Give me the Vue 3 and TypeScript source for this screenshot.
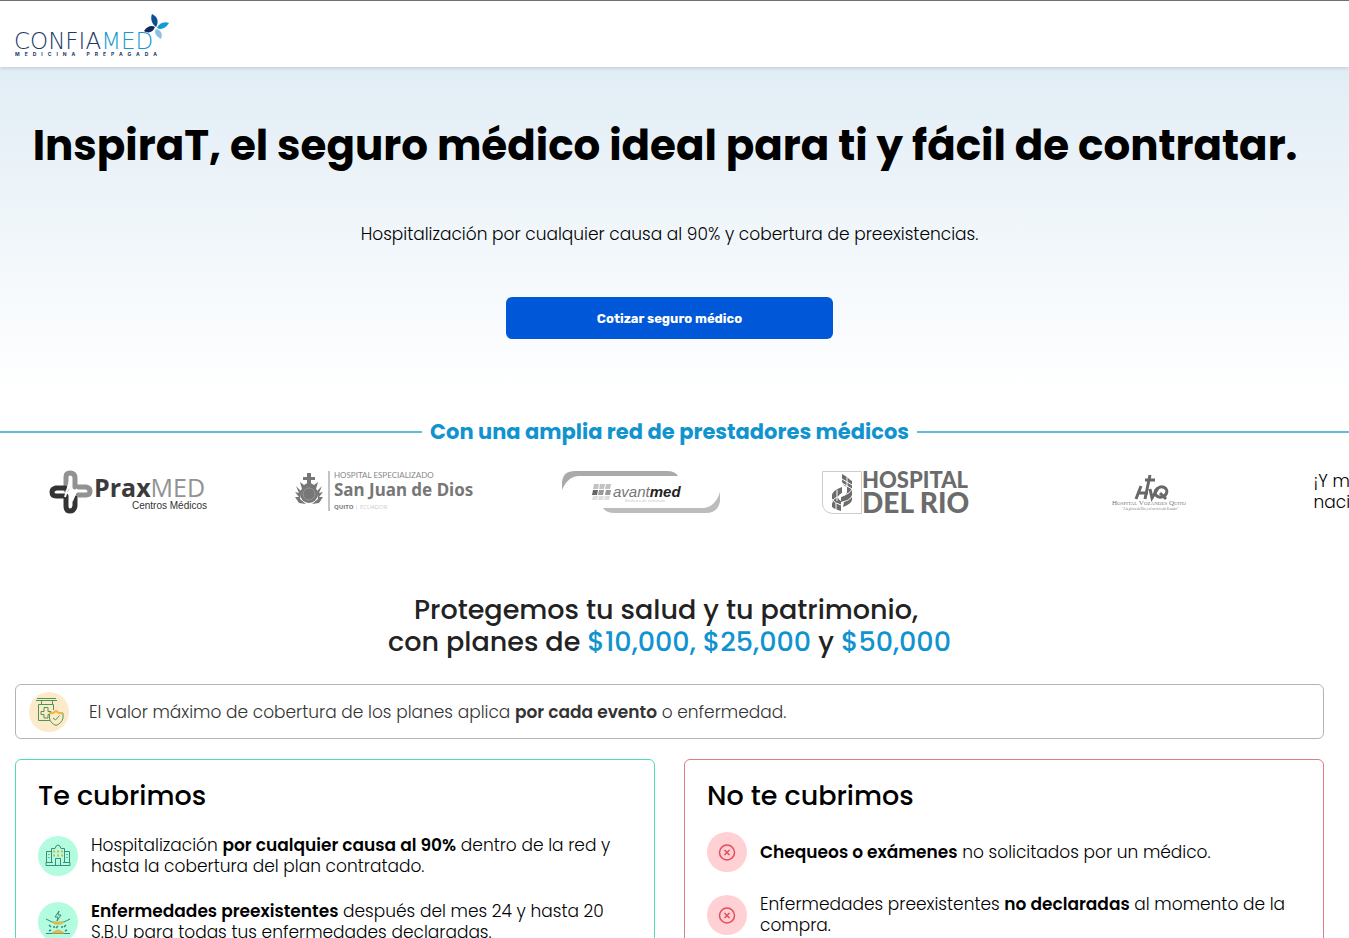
<script setup lang="ts">
interface Segment {
  text: string
  bold?: boolean
}

interface Benefit {
  icon: 'hospital' | 'hourglass'
  segments: Segment[]
}

const benefits: Benefit[] = [
  {
    icon: 'hospital',
    segments: [
      { text: 'Hospitalización ' },
      { text: 'por cualquier causa al 90%', bold: true },
      { text: ' dentro de la red y hasta la cobertura del plan contratado.' },
    ],
  },
  {
    icon: 'hourglass',
    segments: [
      { text: 'Enfermedades preexistentes', bold: true },
      { text: ' después del mes 24 y hasta 20 S.B.U para todas tus enfermedades declaradas.' },
    ],
  },
]

const exclusions: Segment[][] = [
  [{ text: 'Chequeos o exámenes', bold: true }, { text: ' no solicitados por un médico.' }],
  [
    { text: 'Enfermedades preexistentes ' },
    { text: 'no declaradas', bold: true },
    { text: ' al momento de la compra.' },
  ],
]
</script>

<template>
  <div class="page">
    <header class="topbar">
      <a href="#" class="brand" aria-label="Confiamed Medicina Prepagada">
        <svg width="160" height="46" viewBox="0 0 160 46">
          <text x="-1" y="36" class="brand-name"><tspan fill="#1c3768">CONFIA</tspan><tspan fill="#1597d0">MED</tspan></text>
          <text x="0" y="43" class="brand-sub">MEDICINA PREPAGADA</text>
          <path d="M137 1C143 4 144 9 141 14C137 11 135 6 137 1Z" fill="#0b4f94" />
          <path d="M154 10C150 16 146 17 142 15C144 10 149 8 154 10Z" fill="#109bd4" />
          <path d="M129 18C132 13 137 12 140 14C138 19 134 21 129 18Z" fill="#14275a" />
          <path d="M146 26C140 23 139 19 141 16C146 17 148 21 146 26Z" fill="#8bbfe3" />
        </svg>
      </a>
    </header>

    <section class="hero">
      <h1>InspiraT, el seguro médico ideal para ti y fácil de contratar.&nbsp;</h1>
      <p>Hospitalización por cualquier causa al 90% y cobertura de preexistencias.</p>
      <button type="button">Cotizar seguro médico</button>
    </section>

    <section class="network">
      <h2>Con una amplia red de prestadores médicos</h2>
      <ul class="providers">
        <li>
          <svg width="160" height="46" viewBox="0 0 160 46" role="img" aria-label="PraxMED Centros Médicos">
            <g fill="none" stroke-width="5" stroke-linecap="round" stroke-linejoin="round">
              <path d="M18 21V8Q18 4 22 4Q27 4 27 9V18H38Q42 19 42 22Q42 26 38 26H30" stroke="#929292" />
              <path d="M17 19H8Q4 20 4 23Q4 27 8 27H18V37Q18 42 22 42Q26 42 27 37V29" stroke="#343434" />
            </g>
            <path d="M17 28L22 12L24 32L29 20" fill="none" stroke="#fff" stroke-width="2" />
            <text x="46" y="28" class="prax"><tspan fill="#3b3b3b" font-weight="700">Prax</tspan><tspan fill="#929292" font-weight="500">MED</tspan></text>
            <text x="84" y="40" class="prax-sub">Centros Médicos</text>
          </svg>
        </li>
        <li>
          <svg width="178" height="46" viewBox="0 0 178 46" role="img" aria-label="Hospital Especializado San Juan de Dios, Quito, Ecuador">
            <g fill="#777">
              <path d="M12 4H16V8H20V11H16V14H12V11H8V8H12Z" />
              <path d="M5 13L9 16L14 13L19 16L23 13L21 20H7Z" />
              <circle cx="14" cy="25" r="9" />
              <path d="M1 17L6 22L5 30L11 35L4 34L0 28L4 28L0 23L4 24Z" />
              <path d="M27 17L22 22L23 30L17 35L24 34L28 28L24 28L28 23L24 24Z" />
            </g>
            <circle cx="14" cy="25" r="6" fill="none" stroke="#959595" />
            <path d="M34 2V42" stroke="#888" />
            <text x="39" y="9" class="juan-top">HOSPITAL ESPECIALIZADO</text>
            <text x="39" y="27" class="juan">San Juan de Dios</text>
            <text x="39" y="40" class="juan-sub"><tspan font-weight="700" fill="#777">QUITO</tspan><tspan fill="#aaa"> | ECUADOR</tspan></text>
          </svg>
        </li>
        <li>
          <svg width="160" height="46" viewBox="0 0 160 46" role="img" aria-label="Avantmed">
            <path d="M1 21V13Q2 2 14 2H106Q114 2 117 7H18Q7 7 1 21Z" fill="#aaa" />
            <path d="M159 23V32Q157 44 145 44H54Q45 44 42 39H141Q154 39 159 23Z" fill="#bcbcbc" />
            <g fill="#c2c2c2">
              <path d="M33 15H38L37 20H32ZM39 15H44L43 20H38ZM45 15H50L49 20H44Z" />
              <path d="M32 27H37L36 31H31ZM38 27H43L42 31H37ZM44 27H49L48 31H43Z" opacity=".55" />
            </g>
            <path d="M32 21H37L36 26H31Z" fill="#666" />
            <path d="M38 21H43L42 26H37ZM45 21H50L49 26H44Z" fill="#999" />
            <text x="52" y="28" class="avant"><tspan fill="#777">avant</tspan><tspan fill="#222" font-weight="700">med</tspan></text>
            <text x="64" y="33" class="avant-sub">Medicina de avanzada</text>
          </svg>
        </li>
        <li>
          <svg width="150" height="46" viewBox="0 0 150 46" role="img" aria-label="Hospital del Rio">
            <path d="M.5 2.5H39.500V44.500H10Q1 43 .5 35Z" fill="#fff" stroke="#ccc" />
            <g fill="#6b6b6b">
              <path d="M20 5L25 8Q28 11 30 12V26Q28 31 22 32L19 33V28Q24 27 25 23V18Q20 16 20 12Z" />
              <path d="M20 18V24Q16 26 16 29Q17 31 19 32V42Q14 41 10 38V26Q11 21 20 18Z" />
              <path d="M22 33Q27 32 30 28V31Q29 35 21 38Z" />
            </g>
            <path d="M20 10L30 16M20 14L30 20M30 20Q28 25 19 27T10 34M9 29Q13 35 19 36M25 8V18M15 21V32M14 34V41" stroke="#fff" fill="none" />
            <text x="40" y="19" class="rio-top">HOSPITAL</text>
            <text x="40" y="44" class="rio">DEL RIO</text>
          </svg>
        </li>
        <li>
          <svg width="84" height="46" viewBox="0 0 84 46" role="img" aria-label="Hospital Vozandes Quito">
            <g fill="none" stroke="#686868" stroke-width="3">
              <path d="M30 17L25 30M39 6L34 30M28 24H37M34 11H44M39 20L41 29L47 19" />
              <ellipse cx="50" cy="23" rx="6" ry="5" transform="rotate(-20 50 23)" />
              <path d="M49 24L55 30" />
            </g>
            <text x="1" y="36" class="voz">Hospital Vozandes Quito</text>
            <text x="11" y="41" class="voz-sub">"A la gloria de Dios y al servicio del Ecuador"</text>
          </svg>
        </li>
        <li class="more">¡Y más a nivel<br />nacional!</li>
      </ul>
    </section>

    <main class="plans">
      <h2>Protegemos tu salud y tu patrimonio,&nbsp;<br />con planes de <em>$10,000, $25,000</em> y <em>$50,000</em></h2>

      <div class="notice">
        <span class="badge cream">
          <svg width="40" height="40" viewBox="0 0 40 40" fill="none" stroke="#4f9555">
            <path d="M8 6.500H27M7 8.500H28M12.500 9V13M23.500 9V13" />
            <path d="M21 28.500H9.500V12.500H24.500V18" />
            <path d="M15 15.500H19V19.500H22V22.500H19V26H15V22.500H12V19.500H15Z" />
            <path d="M27 19Q30 22 34 21V26Q33 31 27 33.500Q21 31 20.500 26V21Q24 22 27 19Z" fill="#fcebc9" />
            <path d="M20 21Q24 22 27 19Q30 22 34 21" stroke="#efb545" stroke-width="2" />
            <path d="M24 26L26.500 28L30.500 23.500" />
          </svg>
        </span>
        <p>El valor máximo de cobertura de los planes aplica <strong>por cada evento</strong> o enfermedad.</p>
      </div>

      <div class="cards">
        <section class="card covered">
          <h3>Te cubrimos</h3>
          <ul>
            <li v-for="benefit in benefits" :key="benefit.icon">
              <span class="badge mint">
                <svg v-if="benefit.icon === 'hospital'" width="40" height="40" viewBox="0 0 40 40" fill="none" stroke="#388d78">
                  <path d="M8.500 26V15.500H13.500V26M26.500 26V15.500H31.500V26M13.500 26V12.500H17Q18 9 20 9Q22 9 23 12.500H26.500V26M8 26.500H15M25 26.500H32V29.500H8V26.500M17.500 29V22.500H22.500V29" />
                  <path d="M10 18.500H12M10 21.500H12M28 18.500H30M28 21.500H30" opacity=".6" />
                  <path d="M15 15.500H17M19 15.500H21M23 15.500H25M15 19.500H17M19 19.500H21M23 19.500H25" stroke="#d9b54a" stroke-width="2" />
                </svg>
                <svg v-else width="40" height="40" viewBox="0 0 40 40" fill="none" stroke="#388d78">
                  <path d="M21 9L17 15H20L19 19L23 13H20ZM8 17Q14 21 20 21Q26 21 32 17M8 31.500H32" />
                  <path d="M14 20H26Q23 23 20 22Q17 23 14 20ZM14 31Q17 29 20 28Q23 29 26 31Z" fill="#e7bd4e" stroke="#d7b44c" />
                  <path d="M11 23L13 25M15 25H17M11 29L13 28M28 23L26 25M23 25H25M29 28L27 29M18 26L20 24" stroke-width="1.500" />
                </svg>
              </span>
              <p>
                <template v-for="(segment, i) in benefit.segments" :key="i"><strong v-if="segment.bold">{{ segment.text }}</strong><template v-else>{{ segment.text }}</template></template>
              </p>
            </li>
          </ul>
        </section>

        <section class="card excluded">
          <h3>No te cubrimos</h3>
          <ul>
            <li v-for="(exclusion, index) in exclusions" :key="index">
              <span class="badge rose">
                <svg width="40" height="40" viewBox="0 0 40 40" fill="none" stroke="#e94a58" stroke-width="1.500">
                  <circle cx="20" cy="20.500" r="7.500" />
                  <path d="M17.500 18L22.500 23M22.500 18L17.500 23" />
                </svg>
              </span>
              <p>
                <template v-for="(segment, i) in exclusion" :key="i"><strong v-if="segment.bold">{{ segment.text }}</strong><template v-else>{{ segment.text }}</template></template>
              </p>
            </li>
          </ul>
        </section>
      </div>
    </main>
  </div>
</template>

<style>
body {
  margin: 0;
  background: #fff;
}
</style>

<style scoped>
.page {
  height: 100vh;
  overflow: hidden;
  color: #000;
  font-family: Poppins, Inter, 'Liberation Sans', sans-serif;
  font-size: 17px;
  font-weight: 300;
  line-height: 1.2;
}

h1,
h2,
h3,
p,
ul {
  margin: 0;
  padding: 0;
}

ul {
  list-style: none;
}

svg {
  display: block;
  overflow: visible;
}

.topbar {
  position: relative;
  box-sizing: border-box;
  height: 67px;
  padding: 12px 15px 0;
  border-top: 1px solid #6f6f6f;
  background: #fff;
  box-shadow: 0 1px 4px rgba(0, 0, 0, 0.16);
}

.brand {
  display: inline-block;
}

.brand-name {
  font: 200 23px 'DejaVu Sans', sans-serif;
}

.brand-sub {
  font: 700 5px Inter, sans-serif;
  letter-spacing: 5px;
  fill: #1c3768;
}

.hero {
  display: flex;
  flex-direction: column;
  align-items: center;
  padding: 49px 25px 52px 15px;
  background: linear-gradient(#e1edf5, #fff);
  text-align: center;
}

h1 {
  font-size: 42px;
  font-weight: 700;
  line-height: 60px;
}

.hero p {
  margin-top: 48px;
}

.hero button {
  width: 25%;
  height: 42px;
  margin-top: 53px;
  border: 0;
  border-radius: 6px;
  background: #0057d7;
  color: #fff;
  font: 700 13px Rubik, Roboto, sans-serif;
}

.network h2 {
  display: flex;
  align-items: center;
  gap: 8px;
  margin-left: -10px;
  margin-top: 25px;
  color: #1193d0;
  font-size: 21px;
  font-weight: 700;
  line-height: 32px;
}

.network h2::before,
.network h2::after {
  flex: 1;
  height: 2px;
  background: #62bdd5;
  content: '';
}

.providers {
  display: flex;
  margin-top: 21px;
  overflow: hidden;
}

.providers li {
  display: flex;
  flex: 0 0 19%;
  justify-content: center;
  height: 48px;
}

.providers .more {
  justify-content: flex-start;
  box-sizing: border-box;
  padding: 2px 0 0 32px;
  white-space: nowrap;
}

.prax {
  font-family: 'Open Sans', sans-serif;
  font-size: 25px;
}

.prax-sub {
  font: 10px 'Liberation Sans', sans-serif;
  fill: #333;
}

.juan-top {
  font: 8px Lato, sans-serif;
  fill: #888;
}

.juan {
  font: 700 17px 'Noto Sans', sans-serif;
  fill: #777;
}

.juan-sub {
  font-family: 'Open Sans', sans-serif;
  font-size: 6px;
}

.avant {
  font-family: 'Liberation Sans', sans-serif;
  font-size: 15px;
  font-style: italic;
}

.avant-sub {
  font: 4px 'Liberation Sans', sans-serif;
  fill: #ccc;
}

.rio-top {
  font: 900 22px Lato, sans-serif;
  fill: #6b6b6b;
}

.rio {
  font: 900 28px Lato, sans-serif;
  fill: #6b6b6b;
}

.voz {
  font: small-caps 7px 'Liberation Serif', serif;
  fill: #777;
}

.voz-sub {
  font: italic 3px 'Liberation Serif', serif;
  fill: #777;
}

.plans {
  padding: 77px 25px 0 15px;
}

.plans h2 {
  color: #222;
  font-size: 27px;
  font-weight: 500;
  line-height: 32px;
  text-align: center;
}

.plans em {
  color: #1193d0;
  font-style: normal;
}

.notice {
  display: flex;
  align-items: center;
  gap: 20px;
  box-sizing: border-box;
  min-height: 55px;
  margin-top: 26px;
  padding: 0 13px;
  border: 1px solid #b4b4b8;
  border-radius: 6px;
  color: #333;
}

strong {
  font-weight: 600;
}

.badge {
  display: block;
  flex: 0 0 40px;
  height: 40px;
  border-radius: 50%;
}

.cream {
  background: #fcebcb;
}

.mint {
  background: #b3fcdf;
}

.rose {
  background: #ffd0d4;
}

.cards {
  display: grid;
  grid-template-columns: 1fr 1fr;
  gap: 29px;
  margin-top: 20px;
}

.card {
  padding: 20px 22px 40px;
  border: 1px solid;
  border-radius: 6px;
}

.covered {
  border-color: #55dbb0;
}

.excluded {
  border-color: #dc7c86;
}

.card h3 {
  font-size: 27px;
  font-weight: 500;
  line-height: 32px;
}

.card ul {
  display: grid;
  gap: 22px;
  margin-top: 20px;
}

.covered ul {
  gap: 25px;
  margin-top: 23px;
}

.card li {
  display: flex;
  align-items: center;
  gap: 13px;
}
</style>
